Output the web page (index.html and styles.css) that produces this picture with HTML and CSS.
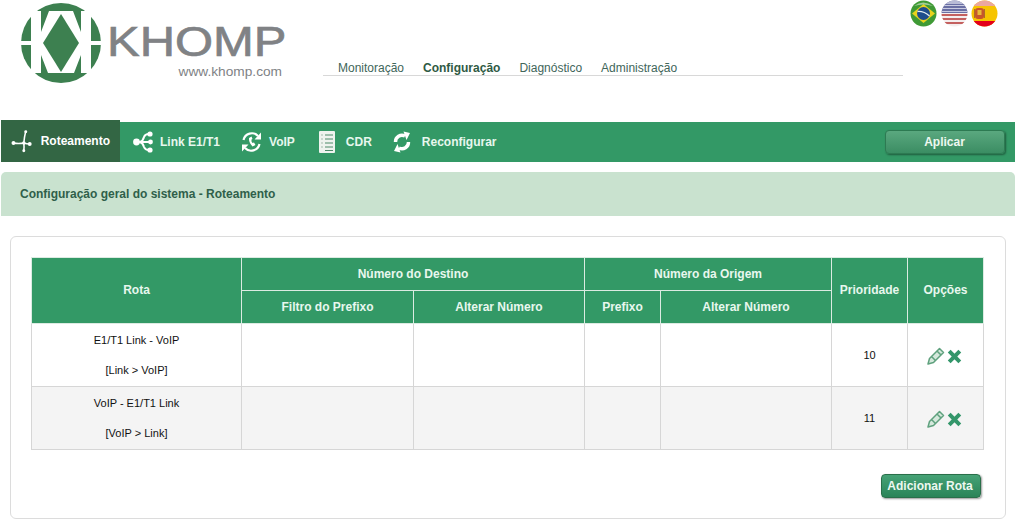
FILE: index.html
```html
<!DOCTYPE html>
<html>
<head>
    <title>Khomp - Roteamento</title>
    <link rel="stylesheet" href="styles.css">
</head>
<body>
    <div class="header">
        <div class="logo">
            <svg class="logo-mark" width="82" height="84" viewBox="0 0 82 84">
                <circle cx="41" cy="42" r="40" fill="#3d8050"/>
                <path d="M11 10 H21 V31 L29 10 H53 L61 31 V10 H71 V72 H61 V54 L54 72 H28 L21 54 V72 H11 Z" fill="#fff"/>
                <path d="M1 40 H24 V44 H1 Z M58 40 H81 V44 H58 Z" fill="#fff"/>
                <path d="M41 13 L59 42 L41 71 L23 42 Z" fill="#3d8050"/>
            </svg>
            <div class="logo-text">
                <div class="logo-name">KHOMP</div>
                <div class="logo-url">www.khomp.com</div>
            </div>
        </div>
        <div class="topmenu">
            <a>Monitoração</a>
            <a class="current">Configuração</a>
            <a>Diagnóstico</a>
            <a>Administração</a>
        </div>
        <div class="flags">
            <svg width="27" height="27" viewBox="0 0 27 27">
                <circle cx="13.5" cy="13.5" r="13" fill="#3f9a35"/>
                <path d="M13.5 4 L25 13.5 L13.5 23 L2 13.5 Z" fill="#e8d21c"/>
                <circle cx="13.5" cy="13.5" r="6.5" fill="#1f4d8c"/>
                <path d="M7.5 11.5 Q14 11 19.5 16" stroke="#e6eef2" stroke-width="1.3" fill="none"/>
                <path d="M4 6 Q13 -1 23 6 Q13 3 4 6 Z" fill="#cfe3c4" opacity="0.7"/>
            </svg>
            <svg width="27" height="27" viewBox="0 0 27 27">
                <defs><clipPath id="us"><circle cx="13.5" cy="13.5" r="13"/></clipPath></defs>
                <g clip-path="url(#us)">
                    <rect width="27" height="27" fill="#f4eeee"/>
                    <rect y="14" width="27" height="2" fill="#c4605f"/>
                    <rect y="18" width="27" height="2" fill="#c4605f"/>
                    <rect y="22" width="27" height="2" fill="#c4605f"/>
                    <rect y="0" width="27" height="13" fill="#6a6fa4"/>
                    <rect y="0" width="27" height="4" fill="#b8bbd6"/>
                    <rect y="5" width="27" height="1" fill="#c9cbe0"/>
                    <rect y="8" width="27" height="1" fill="#c9cbe0"/>
                    <rect y="11" width="27" height="1" fill="#c9cbe0"/>
                </g>
            </svg>
            <svg width="27" height="27" viewBox="0 0 27 27">
                <defs><clipPath id="es"><circle cx="13.5" cy="13.5" r="13"/></clipPath></defs>
                <g clip-path="url(#es)">
                    <rect width="27" height="27" fill="#f6c400"/>
                    <rect width="27" height="6" fill="#eba79f"/>
                    <rect y="21" width="27" height="6" fill="#e3001b"/>
                    <rect x="4" y="8" width="9" height="11" rx="3" fill="#c8552a"/>
                    <rect x="6.5" y="10" width="4" height="5" fill="#e8b93a"/>
                    <rect x="3" y="9" width="1.2" height="9" fill="#b06a2a"/>
                    <rect x="12.8" y="9" width="1.2" height="9" fill="#b06a2a"/>
                </g>
            </svg>
        </div>
    </div>

    <div class="navbar">
        <a class="tab active">
            <svg width="22" height="24" viewBox="0 0 22 24"><path d="M13 14 Q13.5 8 15 2 M13 14 Q8 15 2 14 M13 14 Q16 15 19 15 M13 14 Q13.5 18 13 22" stroke="#fff" stroke-width="1.6" fill="none"/><circle cx="2.5" cy="14" r="2" fill="#fff"/><circle cx="19" cy="15" r="2" fill="#fff"/><circle cx="13" cy="14" r="1.8" fill="#fff"/><circle cx="15" cy="2.5" r="1.5" fill="#fff"/><circle cx="13" cy="22" r="1.5" fill="#fff"/></svg>
            Roteamento
        </a>
        <a class="tab tab-link">
            <svg width="20" height="24" viewBox="0 0 20 24"><circle cx="3.5" cy="12" r="3.4" fill="#fff"/><path d="M4 12 H17 M7 12 Q10 11 11 7 Q12 4 16 4 M7 12 Q10 13 11 17 Q12 20 16 20" stroke="#fff" stroke-width="2" fill="none"/><circle cx="17" cy="4" r="2.6" fill="#fff"/><circle cx="17.5" cy="12" r="2.4" fill="#fff"/><circle cx="17" cy="20" r="2.6" fill="#fff"/></svg>
            Link E1/T1
        </a>
        <a class="tab">
            <svg width="21" height="24" viewBox="0 0 21 24"><path d="M2.5 10 A8.5 8.5 0 0 1 17 6 M18.5 14 A8.5 8.5 0 0 1 4 18" stroke="#fff" stroke-width="2.2" fill="none"/><path d="M20 2.5 V9.5 H13.5 Z M1 21.5 V14.5 H7.5 Z" fill="#fff"/><path d="M8 8 Q7.5 12.5 11.5 16.5 L14.5 15 L13 12.5 L11.5 13 Q10 11.5 10.5 9.5 L11.5 9 L10.5 6.5 Z" fill="#fff"/></svg>
            VoIP
        </a>
        <a class="tab tab-cdr tab-wide">
            <svg width="16" height="24" viewBox="0 0 16 24"><rect y="1" width="16" height="22" rx="1" fill="#eef3ee"/><path d="M6 5 H14 M6 9 H14 M6 13 H14 M6 17 H14 M6 20.5 H14" stroke="#4d8a68" stroke-width="1"/><path d="M2 5 H4 M2 9 H4 M2 13 H4 M2 17 H4" stroke="#a3bbad" stroke-width="1"/></svg>
            CDR
        </a>
        <a class="tab tab-wide">
            <svg width="18" height="24" viewBox="0 0 18 24"><path d="M2.5 12 A6.5 6.5 0 0 1 12 6 M15.5 12 A6.5 6.5 0 0 1 6 18" stroke="#fff" stroke-width="3.4" fill="none"/><path d="M10.5 1.5 L17 3 L13.5 10 Z M7.5 22.5 L1 21 L4.5 14 Z" fill="#fff"/></svg>
            Reconfigurar
        </a>
        <button class="btn btn-apply">Aplicar</button>
    </div>

    <div class="titlebar">Configuração geral do sistema - Roteamento</div>

    <div class="panel">
        <table class="routes">
            <colgroup>
                <col class="c-rota"><col class="c-filtro"><col class="c-alt1"><col class="c-pref"><col class="c-alt2"><col class="c-prio"><col class="c-opt">
            </colgroup>
            <thead>
                <tr>
                    <th class="th-tall" rowspan="2">Rota</th>
                    <th colspan="2">Número do Destino</th>
                    <th colspan="2">Número da Origem</th>
                    <th class="th-tall" rowspan="2">Prioridade</th>
                    <th class="th-tall" rowspan="2">Opções</th>
                </tr>
                <tr>
                    <th>Filtro do Prefixo</th>
                    <th>Alterar Número</th>
                    <th>Prefixo</th>
                    <th>Alterar Número</th>
                </tr>
            </thead>
            <tbody>
                <tr>
                    <td><p>E1/T1 Link - VoIP</p><p>[Link &gt; VoIP]</p></td>
                    <td></td><td></td><td></td><td></td>
                    <td>10</td>
                    <td class="opts">
                        <svg width="18" height="18" viewBox="0 0 18 18"><path d="M1 17 L2.5 11.5 L12.5 1.5 L16.5 5.5 L6.5 15.5 Z M5 10 L8 13 M10.5 4.5 L13.5 7.5" stroke="#5fa17e" stroke-width="1.5" fill="#d5e8dc" stroke-linejoin="round"/></svg>
                        <svg class="icon-del" width="15" height="15" viewBox="0 0 15 15"><path d="M2.2 2.2 L12.8 12.8 M12.8 2.2 L2.2 12.8" stroke="#33966a" stroke-width="4"/></svg>
                    </td>
                </tr>
                <tr class="alt">
                    <td><p>VoIP - E1/T1 Link</p><p>[VoIP &gt; Link]</p></td>
                    <td></td><td></td><td></td><td></td>
                    <td>11</td>
                    <td class="opts">
                        <svg width="18" height="18" viewBox="0 0 18 18"><path d="M1 17 L2.5 11.5 L12.5 1.5 L16.5 5.5 L6.5 15.5 Z M5 10 L8 13 M10.5 4.5 L13.5 7.5" stroke="#5fa17e" stroke-width="1.5" fill="#d5e8dc" stroke-linejoin="round"/></svg>
                        <svg class="icon-del" width="15" height="15" viewBox="0 0 15 15"><path d="M2.2 2.2 L12.8 12.8 M12.8 2.2 L2.2 12.8" stroke="#33966a" stroke-width="4"/></svg>
                    </td>
                </tr>
            </tbody>
        </table>
        <div class="panel-actions">
            <button class="btn btn-add">Adicionar Rota</button>
        </div>
    </div>
</body>
</html>
```

FILE: styles.css
```css
body {
    margin: 0;
    font-family: "Liberation Sans", Arial, sans-serif;
    font-size: 12px;
    color: #222;
    background: #fff;
}
.header {
    display: flex;
    height: 120px;
    padding-right: 19px;
}
.logo {
    display: flex;
    width: 303px;
    padding: 1px 0 0 20px;
    box-sizing: border-box;
}
.logo-mark {
    flex: none;
}
.logo-text {
    margin-left: 5px;
    color: #808285;
}
.logo-name {
    font-size: 42px;
    line-height: 40px;
    margin-top: 21px;
    white-space: nowrap;
    width: 154px;
    transform: scaleX(1.165);
    transform-origin: left center;
    -webkit-text-stroke: 0.7px #808285;
}
.logo-url {
    font-size: 13.7px;
    line-height: 16px;
    margin-top: 2px;
    text-align: right;
    width: 175px;
    white-space: nowrap;
}
.topmenu {
    display: flex;
    align-self: flex-start;
    gap: 19px;
    width: 580px;
    height: 20px;
    margin: 56px 0 0 20px;
    padding-left: 15px;
    box-sizing: border-box;
    border-bottom: 1px solid #d8d8d8;
    font-size: 12px;
    line-height: 24px;
    color: #41665a;
}
.topmenu .current {
    font-weight: bold;
    color: #2f5a44;
}
.flags {
    display: flex;
    gap: 3.5px;
    margin: 0 0 0 auto;
    align-self: flex-start;
}
.navbar {
    display: flex;
    align-items: center;
    height: 40px;
    margin: 2px 2px 0 1px;
    background: #339966;
    position: relative;
}
.tab {
    display: flex;
    align-items: center;
    gap: 7px;
    height: 100%;
    padding: 0 10px 0 11px;
    color: #e8f7ee;
    font-weight: bold;
    font-size: 12px;
}
.tab-link {
    margin-left: 2px;
}
.tab-cdr {
    margin-left: 3px;
}
.tab-wide {
    gap: 11px;
}
.tab.active {
    height: 42px;
    margin-top: -2px;
    padding: 0 10px;
    gap: 8px;
    background: #336644;
    color: #fff;
    box-sizing: border-box;
    width: 119px;
}
.btn {
    font-family: inherit;
    font-weight: bold;
    font-size: 12px;
    color: #eef8f0;
    border: 1px solid #2a6f4a;
    border-radius: 4px;
    background: linear-gradient(#54ab7d, #2f8a5c);
    box-shadow: 1px 1px 2px rgba(0, 0, 0, 0.4);
    cursor: pointer;
}
.btn-apply {
    width: 120px;
    height: 24px;
    margin-left: auto;
    margin-right: 10px;
    padding-right: 7px;
    border-color: #2d7a52;
    background: linear-gradient(#5aa87f, #3b8d63);
}
.titlebar {
    height: 44px;
    margin: 10px 2px 0 1px;
    padding-left: 19px;
    line-height: 45px;
    background: #c9e2cf;
    border-radius: 5px 5px 0 0;
    font-weight: bold;
    color: #2f5f4a;
}
.panel {
    height: 283px;
    margin: 20px 11px 0 10px;
    padding: 20px 20px 0 20px;
    box-sizing: border-box;
    border: 1px solid #dcdcdc;
    border-radius: 6px;
}
.routes {
    width: 952px;
    table-layout: fixed;
    border-collapse: collapse;
}
.c-rota { width: 210px; }
.c-filtro { width: 172px; }
.c-alt1 { width: 171px; }
.c-pref { width: 76px; }
.c-alt2 { width: 171px; }
.c-prio { width: 76px; }
.c-opt { width: 76px; }
.routes th {
    height: 32px;
    padding: 0;
    background: #339966;
    color: #e8f7ee;
    border: 1px solid #dcebe2;
    font-size: 12px;
}
.routes .th-tall {
    padding-bottom: 2px;
}
.routes td {
    height: 60px;
    padding: 0;
    text-align: center;
    font-size: 11px;
    color: #111;
    border: 1px solid #d6d6d6;
}
.routes p {
    margin: 0;
    line-height: 30px;
}
.routes .alt td {
    background: #f4f4f4;
}
.routes .opts {
    padding: 2px 2px 0 0;
}
.opts svg {
    vertical-align: middle;
}
.opts .icon-del {
    margin-left: -2px;
}
.panel-actions {
    display: flex;
    justify-content: flex-end;
    margin-top: 24px;
    padding-right: 4px;
}
.btn-add {
    width: 100px;
    height: 24px;
    padding: 0 2px 0 0;
    background: linear-gradient(#46a276, #2a8458);
}
```
